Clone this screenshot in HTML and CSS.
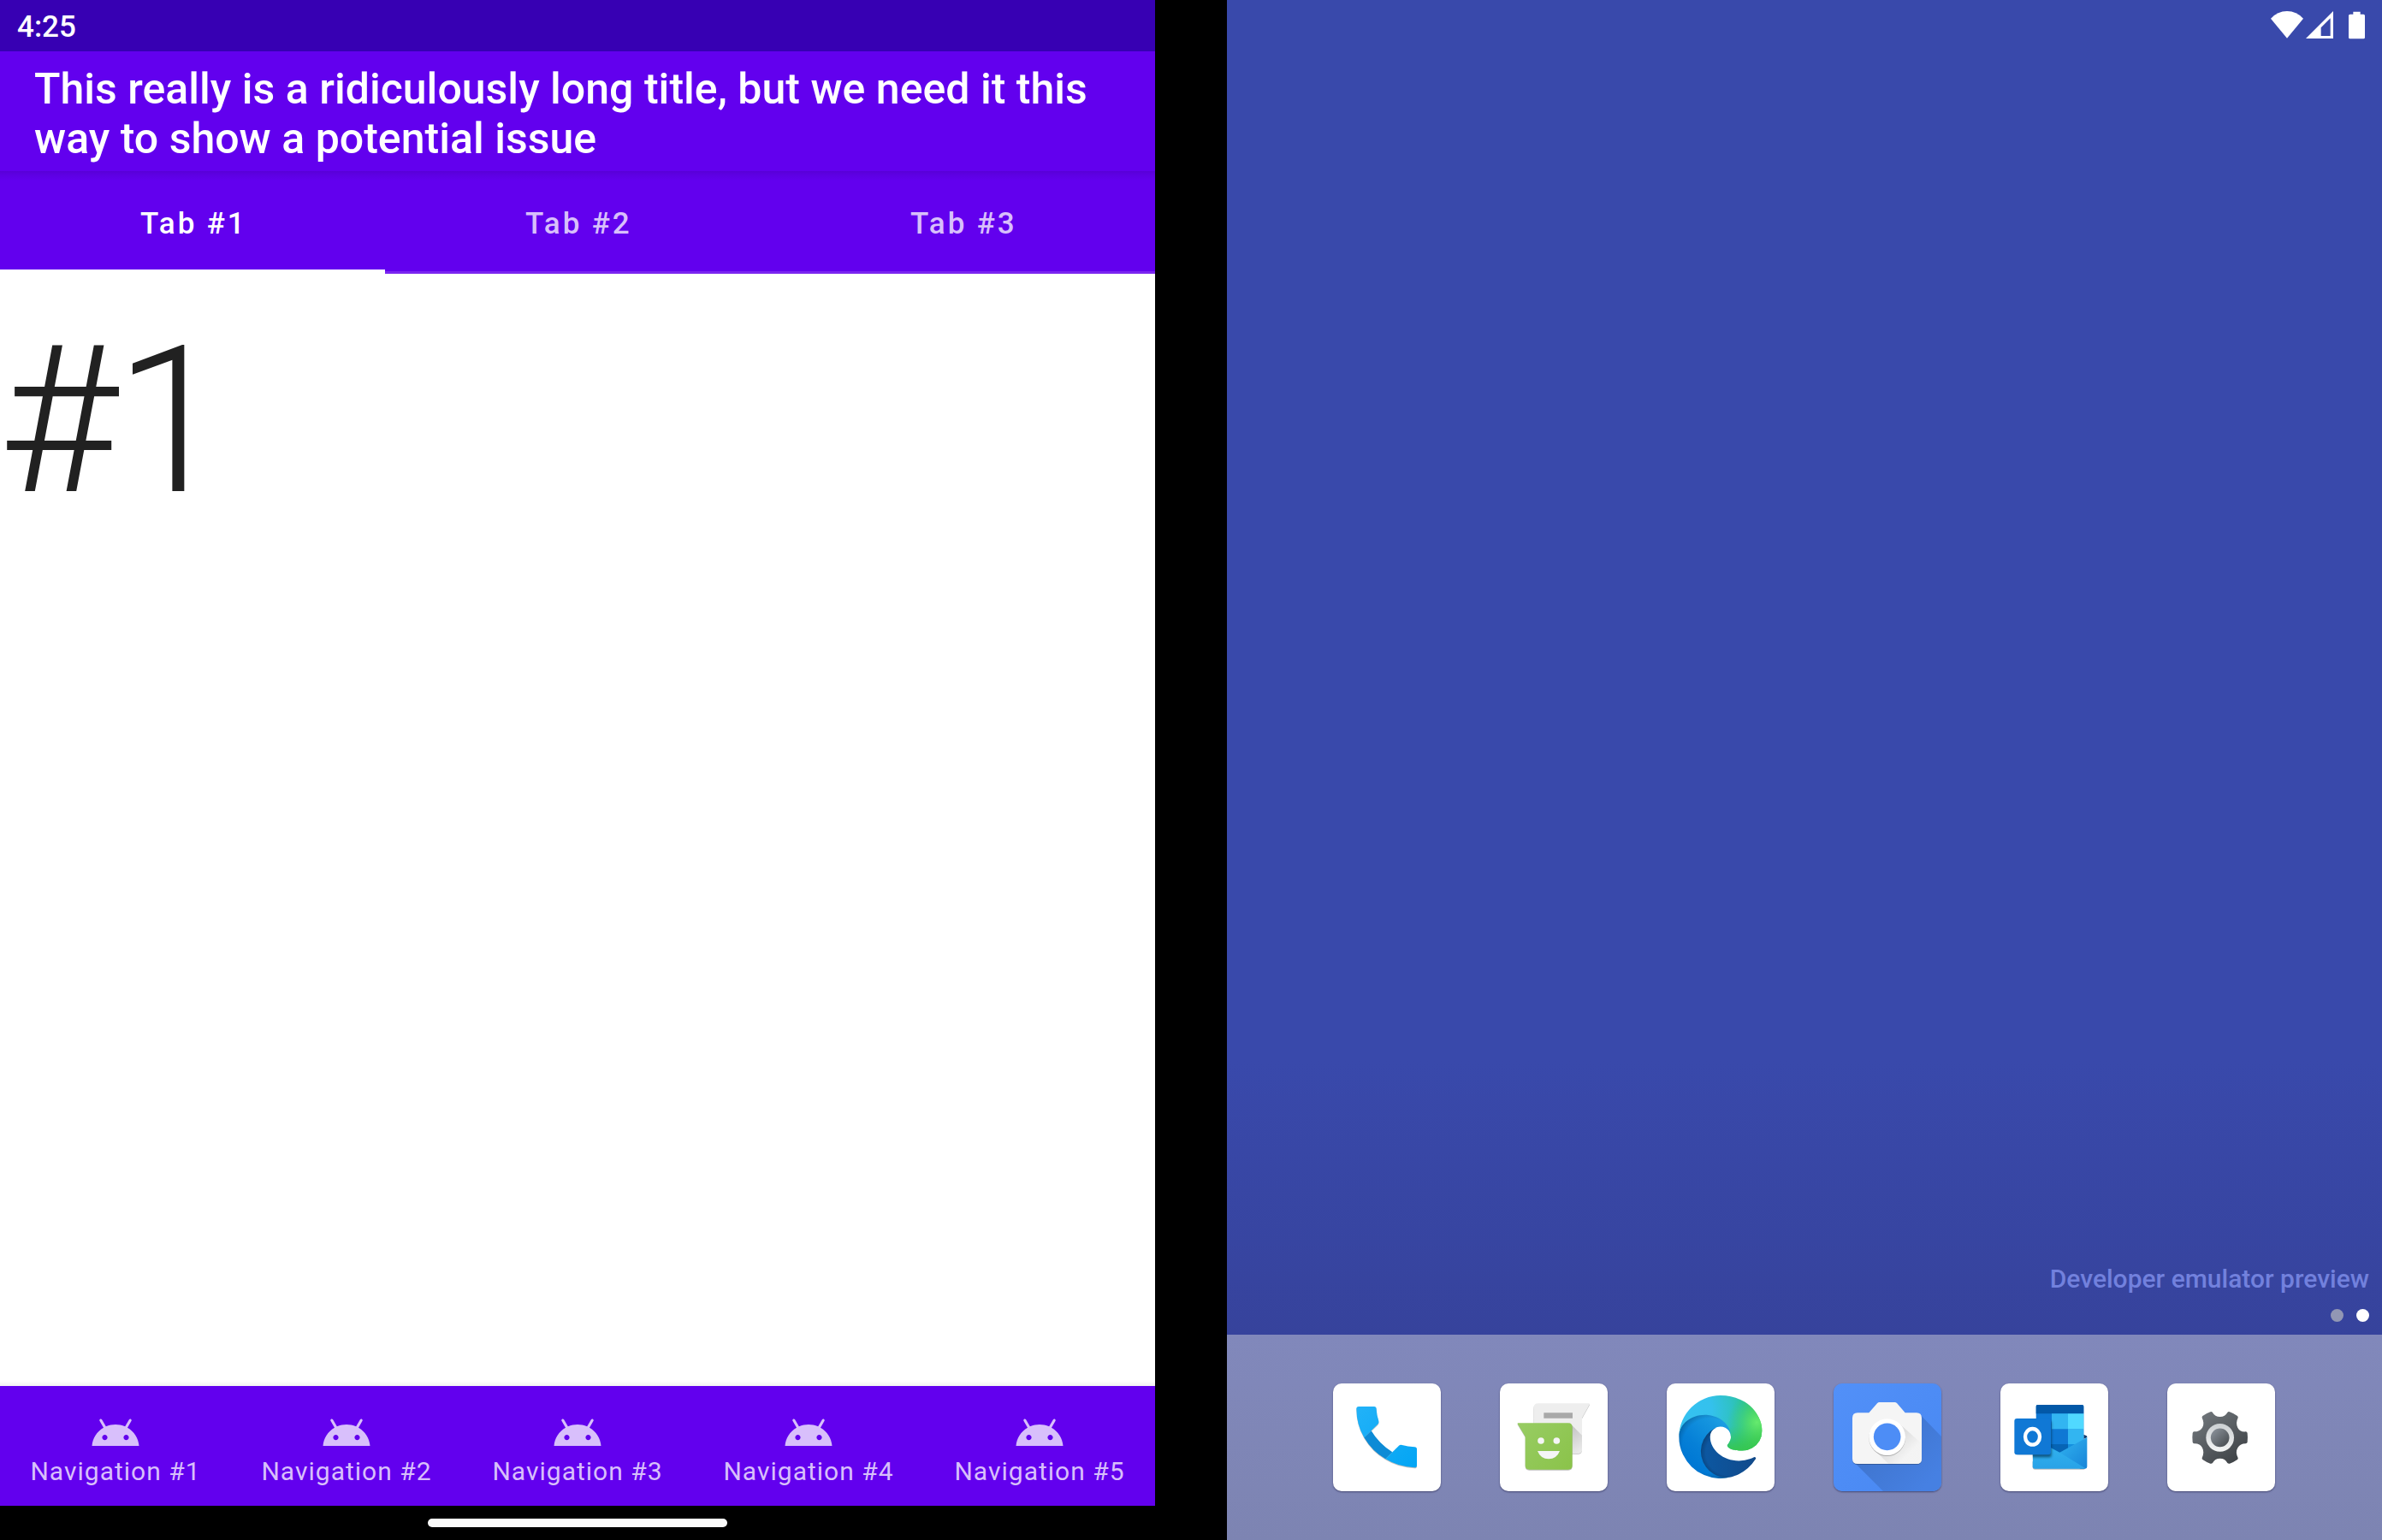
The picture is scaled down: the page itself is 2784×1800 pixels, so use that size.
FILE: index.html
```html
<!DOCTYPE html>
<html lang="en">
<head>
<meta charset="utf-8">
<title>Dual-screen emulator</title>
<link rel="stylesheet" href="styles.css">
</head>
<body>
<svg width="0" height="0" class="defs" aria-hidden="true">
  <symbol id="android" viewBox="0 0 24 24"><path d="M17.6,9.48l1.84,-3.18c0.16,-0.31 0.04,-0.69 -0.26,-0.85 -0.29,-0.15 -0.65,-0.06 -0.83,0.22l-1.88,3.24c-2.86,-1.21 -6.08,-1.21 -8.94,0L5.65,5.67c-0.19,-0.29 -0.58,-0.38 -0.87,-0.2 -0.28,0.18 -0.37,0.54 -0.22,0.83L6.4,9.48C3.3,11.25 1.28,14.44 1,18h22C22.72,14.44 20.7,11.25 17.6,9.48zM7,15.25c-0.69,0 -1.25,-0.56 -1.25,-1.25s0.56,-1.25 1.25,-1.25 1.25,0.56 1.25,1.25S7.69,15.25 7,15.25zM17,15.25c-0.69,0 -1.25,-0.56 -1.25,-1.25s0.56,-1.25 1.25,-1.25 1.25,0.56 1.25,1.25S17.69,15.25 17,15.25z"/></symbol>
</svg>
<main class="device">
  <section class="screen app">
    <div class="status">4:25</div>
    <header class="toolbar"><h1 class="title">This really is a ridiculously long title, but we need it this way to show a potential issue</h1></header>
    <nav class="tabs">
      <div class="tab active">Tab #1</div>
      <div class="tab">Tab #2</div>
      <div class="tab">Tab #3</div>
    </nav>
    <div class="content">#1</div>
    <nav class="bottom-nav">
      <div class="nav-item"><svg class="nav-icon"><use href="#android"/></svg><span>Navigation #1</span></div>
      <div class="nav-item"><svg class="nav-icon"><use href="#android"/></svg><span>Navigation #2</span></div>
      <div class="nav-item"><svg class="nav-icon"><use href="#android"/></svg><span>Navigation #3</span></div>
      <div class="nav-item"><svg class="nav-icon"><use href="#android"/></svg><span>Navigation #4</span></div>
      <div class="nav-item"><svg class="nav-icon"><use href="#android"/></svg><span>Navigation #5</span></div>
    </nav>
    <div class="gesture"><div class="pill"></div></div>
  </section>
  <section class="screen home">
    <div class="home-status">
      <svg class="status-icons" viewBox="0 0 432 180">
        <path fill="#fff" d="M42 65Q66 39 99 39T156 65L99 134Z"/>
        <path fill="#fff" fill-rule="evenodd" d="M165 135L261 39V135ZM218 97V126H251V64Z"/>
        <path fill="#fff" d="M331 41h25v9h11q5 0 5 5v76q0 5-5 5h-47q-5 0-5-5V55q0-5 5-5h11z"/>
      </svg>
    </div>
    <div class="preview">Developer emulator preview</div>
    <div class="dots"><i class="dot"></i><i class="dot current"></i></div>
    <div class="dock">
      <div class="launcher">
        <svg viewBox="54 51 378 378">
          <defs><linearGradient id="ph" gradientUnits="userSpaceOnUse" x1="136" y1="132" x2="348" y2="346"><stop offset="0" stop-color="#22b2f8"/><stop offset="1" stop-color="#03a5f4"/></linearGradient></defs>
          <g class="drop">
            <path fill="#0d8bd6" d="M163 241L188 217Q215 262 262 292L238 316Q192 290 163 241Z"/>
            <path fill="url(#ph)" d="M144 132H198Q206 132 206 140Q207 162 214 182Q216 189 211 194L163 241Q136 194 136 140Q136 132 144 132Z"/>
            <path fill="url(#ph)" d="M238 316L285 269Q290 264 296 267Q316 273 340 274Q348 274 348 282V338Q348 346 340 346Q284 344 238 316Z"/>
          </g>
        </svg>
      </div>
      <div class="launcher">
        <svg viewBox="639 51 378 378">
          <defs>
            <linearGradient id="ms" gradientUnits="userSpaceOnUse" x1="860" y1="200" x2="920" y2="290"><stop offset="0" stop-color="#bcbcbc"/><stop offset="1" stop-color="#eaeaea"/></linearGradient>
            <linearGradient id="mg" gradientUnits="userSpaceOnUse" x1="720" y1="190" x2="890" y2="350"><stop offset="0" stop-color="#97cc62"/><stop offset="1" stop-color="#8bc34a"/></linearGradient>
          </defs>
          <path class="drop" fill="#eee" d="M774 121H951Q955 121 953 125L927 172V281Q927 296 912 296H757V138Q757 121 774 121Z"/>
          <path fill="url(#ms)" d="M884 190L927 233V281Q927 296 912 296H860Z"/>
          <path fill="#a9a9a9" d="M793 154H894V173H793Z"/>
          <path class="drop" fill="url(#mg)" d="M703 190H879Q893 190 893 204V339Q893 353 879 353H742Q728 353 728 339V238L701 193Q700 190 703 190Z"/>
          <circle cx="783" cy="252" r="11.5" fill="#f5f5f5"/><circle cx="838" cy="252" r="11.5" fill="#f5f5f5"/>
          <path fill="#f5f5f5" d="M771 288H849Q838 316 810 316T771 288Z"/>
        </svg>
      </div>
      <div class="launcher">
        <svg viewBox="54 51 378 378">
          <defs>
            <linearGradient id="e1" gradientUnits="userSpaceOnUse" x1="63" y1="178" x2="242" y2="178"><stop offset="0" stop-color="#0c59a4"/><stop offset="1" stop-color="#114a8b"/></linearGradient>
            <radialGradient id="e1s" gradientUnits="userSpaceOnUse" cx="162" cy="182" r="95" gradientTransform="matrix(1 0 0 .95 0 9)"><stop offset=".78" stop-opacity="0"/><stop offset=".95" stop-opacity=".2"/><stop offset="1" stop-opacity=".3"/></radialGradient>
            <linearGradient id="e2" gradientUnits="userSpaceOnUse" x1="153" y1="100" x2="46" y2="217"><stop offset="0" stop-color="#1b9de2"/><stop offset=".16" stop-color="#1595df"/><stop offset=".67" stop-color="#0680d7"/><stop offset="1" stop-color="#0078d4"/></linearGradient>
            <radialGradient id="e2s" gradientUnits="userSpaceOnUse" cx="100" cy="160" r="108"><stop offset=".78" stop-opacity="0"/><stop offset=".92" stop-opacity=".14"/><stop offset="1" stop-opacity=".28"/></radialGradient>
            <radialGradient id="e3" gradientUnits="userSpaceOnUse" cx="25" cy="52" r="230"><stop offset="0" stop-color="#35c1f1"/><stop offset=".35" stop-color="#34c1ed"/><stop offset=".62" stop-color="#2fc2c4"/><stop offset=".78" stop-color="#2bc3a0"/><stop offset="1" stop-color="#36c752"/></radialGradient>
            <radialGradient id="e4" gradientUnits="userSpaceOnUse" cx="245" cy="88" r="92"><stop offset="0" stop-color="#66eb6e"/><stop offset="1" stop-color="#3acb58" stop-opacity="0"/></radialGradient>
            <linearGradient id="e5" gradientUnits="userSpaceOnUse" x1="0" y1="100" x2="0" y2="176"><stop offset="0" stop-color="#36c752" stop-opacity="0"/><stop offset="1" stop-color="#36c752"/></linearGradient>
            <path id="eg" d="M156.94 153.78c-.81 1.05-3.3 2.5-3.3 5.66 0 2.61 1.7 5.12 4.72 7.23 14.38 10 41.49 8.68 41.56 8.68a59.56 59.56 0 0 0 30.27-8.35 61.38 61.38 0 0 0 30.43-52.88c.26-22.41-8-37.31-11.34-43.91-21.19-41.45-66.93-65.29-116.67-65.29a128 128 0 0 0-128 126.2c.48-36.54 36.8-66.05 80-66.05 3.5 0 23.46.34 42 10.07 16.34 8.58 24.9 18.94 30.85 29.21 6.18 10.67 7.28 24.15 7.28 29.52s-2.74 13.33-7.8 19.91Z"/>
            <path id="ed" d="M235.68 195.46a93.73 93.73 0 0 1-10.54 4.71 101.87 101.87 0 0 1-35.9 6.46c-47.32 0-88.54-32.55-88.54-74.32A31.48 31.48 0 0 1 117.13 105c-42.8 1.8-53.8 46.4-53.8 72.53 0 73.88 68.09 81.37 82.76 81.37 7.91 0 19.84-2.3 27-4.56l1.31-.44a128.34 128.34 0 0 0 66.6-52.8 4 4 0 0 0-5.32-5.64Z"/>
            <path id="eb" d="M110.34 246.34A79.2 79.2 0 0 1 87.6 225a80.72 80.72 0 0 1 29.53-120c3.12-1.47 8.45-4.13 15.54-4a32.35 32.35 0 0 1 25.69 13 31.88 31.88 0 0 1 6.36 18.66c0-.21 24.46-79.6-80-79.6-43.9 0-80 41.66-80 78.21a130.15 130.15 0 0 0 12.11 56 128 128 0 0 0 156.38 67.11 75.55 75.55 0 0 1-62.78-8Z"/>
          </defs>
          <g transform="translate(97 93) scale(1.137) translate(-4.63 -4.92)">
            <use href="#ed" fill="url(#e1)"/><use href="#ed" fill="url(#e1s)"/>
            <use href="#eb" fill="url(#e2)"/><use href="#eb" fill="url(#e2s)"/>
            <use href="#eg" fill="url(#e3)"/><use href="#eg" fill="url(#e5)"/><use href="#eg" fill="url(#e4)"/>
          </g>
        </svg>
      </div>
      <div class="launcher camera">
        <svg viewBox="69 51 378 378">
          <defs>
            <linearGradient id="cs" gradientUnits="userSpaceOnUse" x1="250" y1="250" x2="400" y2="400"><stop offset="0" stop-color="#4076d0"/><stop offset="1" stop-color="#4680e2"/></linearGradient>
            <linearGradient id="cl" gradientUnits="userSpaceOnUse" x1="270" y1="250" x2="325" y2="305"><stop offset="0" stop-color="#cfcfcf"/><stop offset="1" stop-color="#f3f3f3"/></linearGradient>
          </defs>
          <path fill="url(#cs)" d="M372 160L447 237V399Q447 429 417 429H243L141 327Z"/>
          <path class="drop" fill="#f5f5f5" d="M153 154H193L222 121Q225 117 230 117H283Q288 117 291 120L320 154H360Q378 154 378 172V315Q378 333 360 333H153Q135 333 135 315V172Q135 154 153 154Z"/>
          <path fill="url(#cl)" d="M302 194L378 262V315Q378 333 360 333H262L212 284Z" opacity=".7"/>
          <circle class="drop" cx="257" cy="239" r="64" fill="#fff"/><circle cx="257" cy="238" r="47.5" fill="#4d8df6"/>
        </svg>
      </div>
      <div class="launcher">
        <svg viewBox="54 51 378 378">
          <defs>
            <linearGradient id="o1" x1="0" y1="0" x2="0" y2="1"><stop offset="0" stop-color="#35b8f1"/><stop offset="1" stop-color="#28a2e7"/></linearGradient>
            <linearGradient id="o2" x1="0" y1="0" x2="1" y2="1"><stop offset="0" stop-color="#34b8f2"/><stop offset="1" stop-color="#1784d8"/></linearGradient>
            <clipPath id="oc"><path d="M185 126H339Q347 126 347 134V320H178V134Q178 126 185 126Z"/></clipPath>
            <clipPath id="oc2"><path d="M178 126H347V240H358V350H167V300H178Z"/></clipPath>
            <filter id="ob" x="-30%" y="-30%" width="160%" height="160%"><feGaussianBlur stdDeviation="5"/></filter>
          </defs>
          <path fill="#123b6d" d="M346 230L356 235Q358 236 358 240L346 246Z"/>
          <g clip-path="url(#oc)">
            <path fill="#0f78d4" d="M178 126H347V320H178Z"/>
            <path fill="#0358a7" d="M178 126H347V157H178Z"/>
            <path fill="#32b5f1" d="M234 157H291V211H234ZM291 211H347V265H291Z"/>
            <path fill="#50d9ff" d="M291 157H347V211H291Z"/>
            <path fill="#0664b5" d="M178 264H291V320H178Z"/><path fill="#1490df" d="M291 264H347V320H291Z"/>
          </g>
          <path fill="url(#o2)" d="M358 240V343Q358 350 351 350H335L240 300L262 293Z"/>
          <path class="drop" fill="url(#o1)" d="M167 242L262 293L350 347Q350 350 345 350H174Q167 350 167 343Z"/>
          <rect x="113" y="182" width="120" height="128" rx="8" fill="#002a4a" opacity=".65" filter="url(#ob)"/>
          <path fill="#fff" d="M90 160H103V325H90ZM103 301H167V325H103Z"/>
          <rect x="103" y="174" width="128" height="127" rx="9" fill="#1078d5"/>
          <ellipse cx="166.500" cy="238" rx="25.500" ry="28" fill="none" stroke="#fff" stroke-width="13"/>
        </svg>
      </div>
      <div class="launcher">
        <svg viewBox="639 51 378 378">
          <defs>
            <linearGradient id="g1" x1="0" y1="0" x2=".8" y2="1"><stop offset="0" stop-color="#757b80"/><stop offset="1" stop-color="#3e4246"/></linearGradient>
            <linearGradient id="g2" x1="0" y1="0" x2="0" y2="1"><stop offset="0" stop-color="#cbcfd2"/><stop offset="1" stop-color="#f4f5f5"/></linearGradient>
            <linearGradient id="g3" x1="0" y1="0" x2="1" y2="1"><stop offset="0" stop-color="#9097a0"/><stop offset="1" stop-color="#42474b"/></linearGradient>
          </defs>
          <path fill="url(#g1)" d="M790 151Q795 149 798 153Q806 168 824 168T850 153Q853 149 858 151Q872 156 885 165Q888 168 887 172Q878 190 886 206T914 220Q919 221 920 225Q922 241 920 257Q919 261 914 262Q895 262 886 277T887 312Q888 315 885 318Q872 327 858 332Q853 333 850 330Q842 314 824 314T798 330Q795 333 790 332Q776 327 763 318Q760 315 761 312Q770 293 762 277T733 262Q729 261 728 257Q726 241 728 225Q729 221 733 220Q753 220 762 206T761 172Q760 168 763 165Q776 156 790 151Z"/>
          <circle cx="824" cy="241" r="49" fill="url(#g2)"/><circle cx="824" cy="241" r="32.500" fill="url(#g3)"/>
        </svg>
      </div>
    </div>
  </section>
</main>
</body>
</html>
```
FILE: styles.css
```css
body {
  margin: 0;
  background: #000;
  font-family: Roboto, sans-serif;
}
.defs { position: absolute; }
.device {
  display: flex;
  justify-content: space-between;
  width: 2784px;
  height: 1800px;
  overflow: hidden;
}
.screen {
  display: flex;
  flex-direction: column;
  width: 1350px;
  height: 1800px;
}
.status {
  box-sizing: border-box;
  height: 60px;
  padding: 11px 0 0 20px;
  background: #3700b3;
  color: #fff;
  font-size: 35px;
  font-weight: 500;
  line-height: 41px;
}
.toolbar {
  box-sizing: border-box;
  height: 140px;
  padding: 15px 40px 0;
  background: #6200ee;
  color: #fff;
}
.title {
  margin: 0;
  font-size: 50px;
  font-weight: 500;
  line-height: 58px;
  letter-spacing: .025px;
}
.tabs {
  display: flex;
  height: 120px;
  background: linear-gradient(#5800d6, #5d00e2 4px, #6200ee 11px);
}
.tab {
  box-sizing: border-box;
  flex: 1;
  padding-top: 41px;
  border-bottom: 3px solid #7a26f0;
  color: #d8bffb;
  font-size: 35px;
  font-weight: 500;
  line-height: 41px;
  letter-spacing: 2.9px;
  text-indent: 2.5px;
  text-align: center;
}
.tab.active {
  border-bottom: 5px solid #fff;
  color: #fff;
}
.content {
  flex: 1;
  padding-top: 32px;
  background: linear-gradient(to top, #f2f2f2, #fff 6px);
  color: #212121;
  font-size: 240px;
  font-weight: 300;
  line-height: 281px;
  letter-spacing: -3.75px;
  text-indent: -1.875px;
}
.bottom-nav {
  display: flex;
  height: 140px;
  background: #6200ee;
}
.nav-item {
  display: flex;
  flex: 1;
  flex-direction: column;
  align-items: center;
  padding-top: 25px;
  color: #d8bffb;
  font-size: 30px;
  line-height: 35px;
  letter-spacing: 1px;
}
.nav-icon {
  width: 60px;
  height: 60px;
  margin-bottom: -3px;
  fill: currentColor;
}
.gesture {
  display: flex;
  align-items: center;
  justify-content: center;
  height: 40px;
  background: #000;
}
.pill {
  width: 350px;
  height: 10px;
  border-radius: 5px;
  background: #fafafa;
}
.home { background: linear-gradient(#3949ab 0, #3949ab 1240px, #36429a 1600px, #354095 1800px); }
.home-status {
  display: flex;
  flex: 1;
  align-items: flex-start;
  justify-content: flex-end;
}
.status-icons {
  width: 144px;
  height: 60px;
}
.preview {
  margin-right: 15px;
  color: #7281dd;
  font-size: 30px;
  font-weight: 500;
  line-height: 35px;
  text-align: right;
}
.dots {
  display: flex;
  gap: 15px;
  justify-content: flex-end;
  padding: 18px 15px 15px;
}
.dot {
  width: 15px;
  height: 15px;
  border-radius: 50%;
  background: #9297b4;
}
.dot.current { background: #fff; }
.dock {
  box-sizing: border-box;
  display: flex;
  gap: 69px;
  height: 240px;
  padding: 57px 0 0 124px;
  background: linear-gradient(#8188bb, #7d84b2);
}
.launcher {
  width: 126px;
  height: 126px;
  overflow: hidden;
  border-radius: 10px;
  background: #fff;
  box-shadow: 0 1px 2px rgba(40, 40, 80, .65);
}
.launcher svg {
  display: block;
  width: 126px;
  height: 126px;
}
.camera { background: linear-gradient(135deg, #5290f8, #4888f2); }
.drop { filter: drop-shadow(0 3px 2px rgba(0, 0, 0, .25)); }
```
